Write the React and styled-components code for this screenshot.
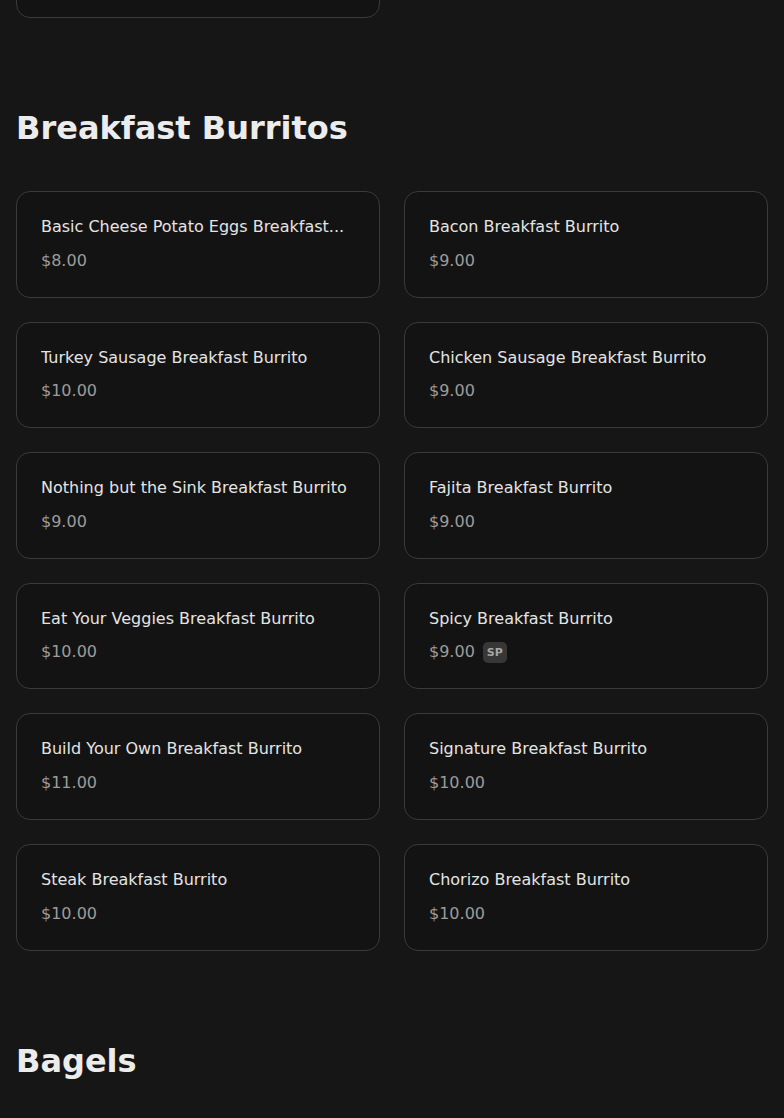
import React from 'react';
import styled, { createGlobalStyle } from 'styled-components';

const GlobalStyle = createGlobalStyle`
  html, body {
    margin: 0;
    padding: 0;
    background: #161616;
    color: #e6e6e6;
    font-family: "DejaVu Sans", Verdana, sans-serif;
    overflow: hidden;
  }
`;

const Page = styled.main`
  display: flex;
  flex-direction: column;
  gap: 86px;
  padding: 0 16px;
  margin-top: -88.6px;
`;

const Section = styled.section`
  display: flex;
  flex-direction: column;
`;

const Heading = styled.h2`
  margin: 0 0 39px;
  font-size: 32px;
  line-height: 48px;
  font-weight: 700;
  color: #ececec;
`;

const Grid = styled.div`
  display: grid;
  grid-template-columns: 1fr 1fr;
  gap: 24px;
`;

const Card = styled.div`
  display: flex;
  flex-direction: column;
  gap: 11px;
  padding: 25px 24px 24px;
  min-width: 0;
  min-height: ${({ $blank }) => ($blank ? '106.6px' : 'auto')};
  box-sizing: border-box;
  background: #131313;
  border: 1px solid #3a3a3a;
  border-radius: 14px;
`;

const Name = styled.div`
  font-size: 16px;
  line-height: 20.6px;
  color: #e4e4e4;
  white-space: nowrap;
  overflow: hidden;
  text-overflow: ellipsis;
`;

const PriceRow = styled.div`
  display: flex;
  align-items: center;
  gap: 8px;
  font-size: 16px;
  line-height: 24px;
  color: #9c9c9c;
`;

const Tag = styled.span`
  font-size: 11px;
  line-height: 13px;
  font-weight: 700;
  padding: 4px 4px;
  border-radius: 5px;
  background: #373737;
  color: #a6a6a6;
`;

const burritos = [
  { name: 'Basic Cheese Potato Eggs Breakfast...', price: '$8.00' },
  { name: 'Bacon Breakfast Burrito', price: '$9.00' },
  { name: 'Turkey Sausage Breakfast Burrito', price: '$10.00' },
  { name: 'Chicken Sausage Breakfast Burrito', price: '$9.00' },
  { name: 'Nothing but the Sink Breakfast Burrito', price: '$9.00' },
  { name: 'Fajita Breakfast Burrito', price: '$9.00' },
  { name: 'Eat Your Veggies Breakfast Burrito', price: '$10.00' },
  { name: 'Spicy Breakfast Burrito', price: '$9.00', tag: 'SP' },
  { name: 'Build Your Own Breakfast Burrito', price: '$11.00' },
  { name: 'Signature Breakfast Burrito', price: '$10.00' },
  { name: 'Steak Breakfast Burrito', price: '$10.00' },
  { name: 'Chorizo Breakfast Burrito', price: '$10.00' },
];

const MenuCard = ({ item }) => (
  <Card>
    <Name>{item.name}</Name>
    <PriceRow>
      {item.price}
      {item.tag && <Tag>{item.tag}</Tag>}
    </PriceRow>
  </Card>
);

export default function App() {
  return (
    <>
      <GlobalStyle />
      <Page>
        <Section>
          <Grid>
            <Card $blank aria-hidden="true" />
          </Grid>
        </Section>
        <Section>
          <Heading>Breakfast Burritos</Heading>
          <Grid>
            {burritos.map((b) => (
              <MenuCard key={b.name} item={b} />
            ))}
          </Grid>
        </Section>
        <Section>
          <Heading>Bagels</Heading>
        </Section>
      </Page>
    </>
  );
}
